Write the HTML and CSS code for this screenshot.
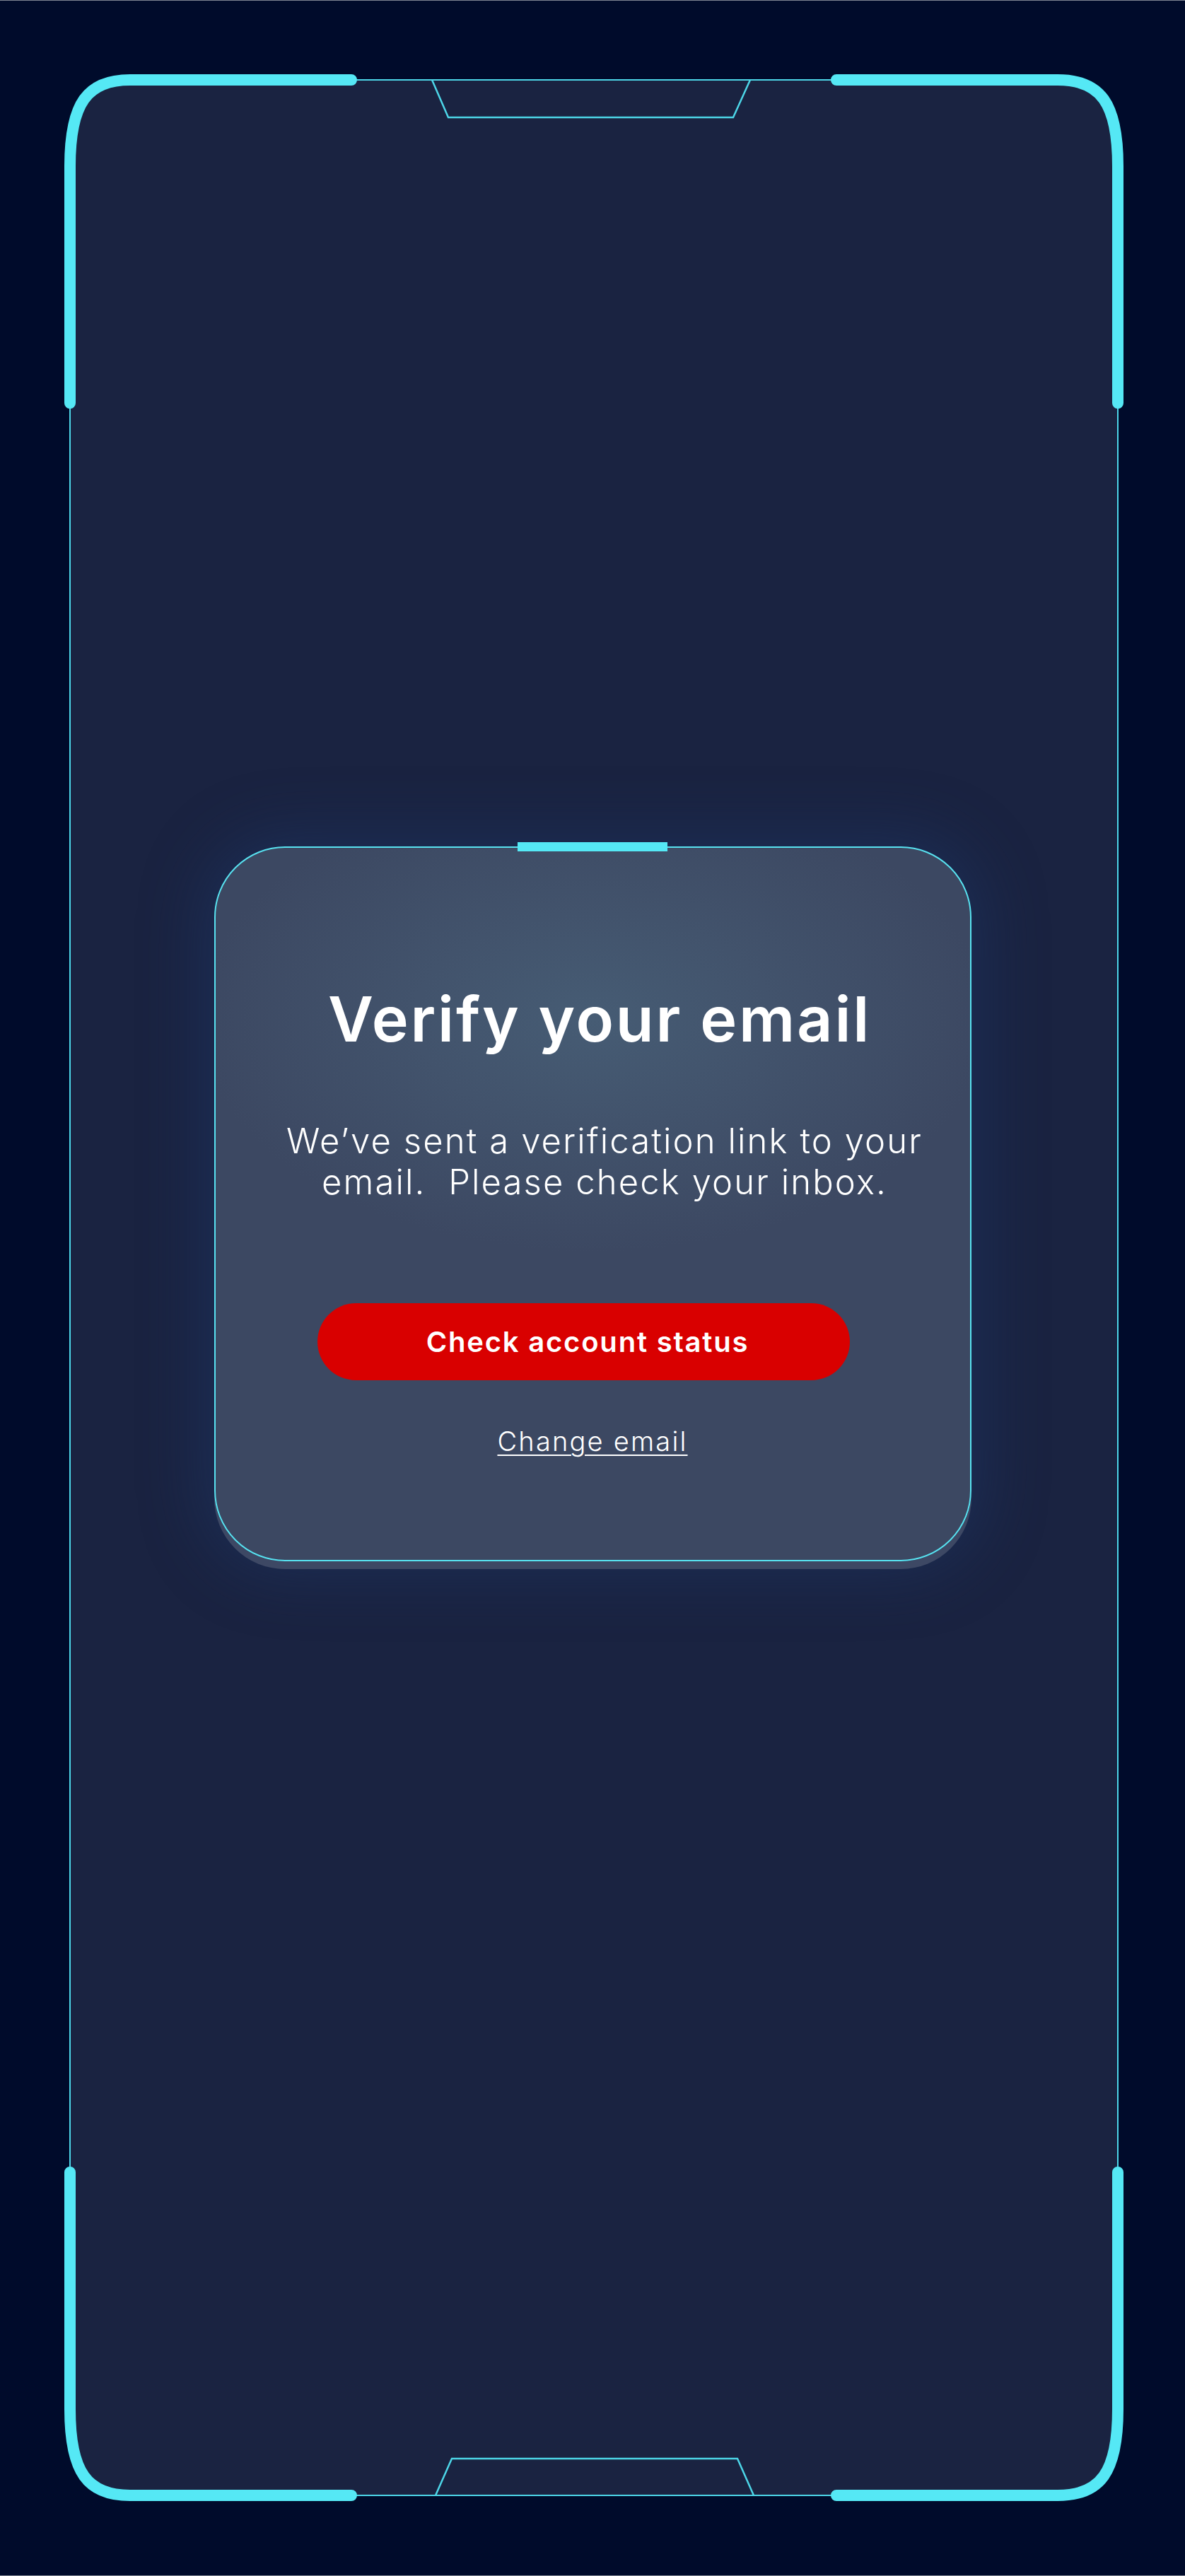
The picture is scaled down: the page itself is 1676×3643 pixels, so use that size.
FILE: index.html
```html
<!DOCTYPE html>
<html lang="en">
<head>
<meta charset="utf-8">
<title>Verify your email</title>
<link rel="stylesheet" href="styles.css">
</head>
<body>
<div class="screen">
  <svg class="frame" width="1676" height="3643" viewBox="0 0 1676 3643" aria-hidden="true">
    <rect x="0" y="0" width="1676" height="1" fill="#7f8594"/>
    <rect x="0" y="3642" width="1676" height="1" fill="#7f8594"/>
    <path d="M99,235 C99,145 124,113 184,113 L1496,113 C1556,113 1581,145 1581,235 L1581,3407 C1581,3497 1556,3529 1496,3529 L184,3529 C124,3529 99,3497 99,3407 Z" fill="#1a2341"/>
    <path d="M99,570 V3074 M1581,570 V3074 M497,113 H1183 M497,3529 H1183" fill="none" stroke="#4dd6e8" stroke-width="2"/>
    <path d="M611,113 L634,166 H1037 L1061,113" fill="none" stroke="#4dd6e8" stroke-width="2.5"/>
    <path d="M616,3529 L639,3477 H1043 L1066,3529" fill="none" stroke="#4dd6e8" stroke-width="2.5"/>
    <g fill="none" stroke="#55e8f5" stroke-width="16" stroke-linecap="round" stroke-linejoin="round">
      <path d="M99,570 V235 C99,145 124,113 184,113 H497"/>
      <path d="M1581,570 V235 C1581,145 1556,113 1496,113 H1183"/>
      <path d="M99,3072 V3407 C99,3497 124,3529 184,3529 H497"/>
      <path d="M1581,3072 V3407 C1581,3497 1556,3529 1496,3529 H1183"/>
    </g>
  </svg>
  <main class="stage">
    <section class="card">
      <span class="card-accent"></span>
      <h1 class="title">Verify your email</h1>
      <p class="message">We’ve sent a verification link to your<br>email.&nbsp; Please check your inbox.</p>
      <button class="btn-primary" type="button">Check account status</button>
      <a class="link" href="#">Change email</a>
    </section>
  </main>
</div>
</body>
</html>
```

FILE: styles.css
```css
* {
  box-sizing: border-box;
}

html,
body {
  margin: 0;
  padding: 0;
}

body {
  background: #000b2b;
  font-family: Inter, "Noto Sans", "DejaVu Sans", sans-serif;
  color: #ffffff;
}

.screen {
  position: relative;
  width: 1676px;
  height: 3643px;
  overflow: hidden;
}

.frame {
  position: absolute;
  left: 0;
  top: 0;
  display: block;
}

.stage {
  position: relative;
  display: flex;
  justify-content: center;
  padding-top: 1197px;
}

.card {
  position: relative;
  width: 1071px;
  height: 1011px;
  border: 2px solid #58e2f0;
  border-radius: 100px;
  background:
    radial-gradient(ellipse 560px 330px at 50% 24%, #465c74 0%, #42536c 45%, #3c4862 100%);
  box-shadow:
    0 11px 0 0 #3d4864,
    0 0 90px 14px rgba(32, 60, 110, 0.45);
  display: flex;
  flex-direction: column;
  align-items: center;
}

.card-accent {
  position: absolute;
  top: -8px;
  left: 50%;
  width: 212px;
  height: 13px;
  margin-left: -106px;
  background: #55e9f6;
}

.title {
  margin: 197px 0 0 20px;
  font-size: 88px;
  line-height: 90px;
  font-weight: 600;
  letter-spacing: 2.8px;
  color: #ffffff;
  white-space: nowrap;
}

.message {
  margin: 99px 0 0 34px;
  font-size: 49px;
  line-height: 58px;
  font-weight: 300;
  letter-spacing: 2.1px;
  text-align: center;
  white-space: nowrap;
}

.btn-primary {
  margin: 142px 26px 0 0;
  padding: 0 0 0 12px;
  width: 753px;
  height: 109px;
  border: 0;
  border-radius: 55px;
  background: #d90000;
  color: #ffffff;
  font-family: Inter, "Noto Sans", sans-serif;
  font-size: 40px;
  font-weight: 600;
  letter-spacing: 1.8px;
  cursor: pointer;
}

.link {
  margin-top: 64px;
  font-size: 38px;
  line-height: 45px;
  font-weight: 300;
  letter-spacing: 2.2px;
  color: #ffffff;
  text-decoration: underline;
  text-decoration-thickness: 2px;
  text-underline-offset: 5px;
}
```
